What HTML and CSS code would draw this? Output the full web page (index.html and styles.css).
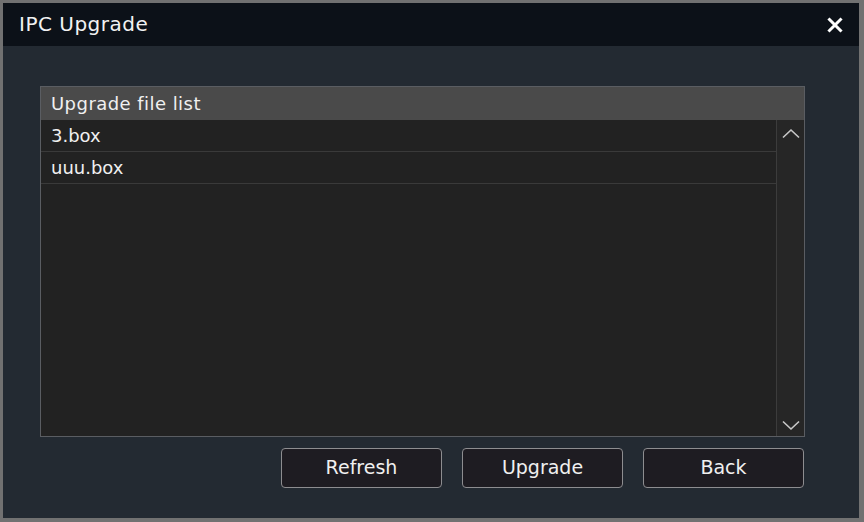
FILE: index.html
```html
<!DOCTYPE html>
<html>
<head>
<meta charset="utf-8">
<link rel="stylesheet" href="styles.css">
</head>
<body>
<div class="dialog">
  <div class="titlebar">
    <span class="title">IPC Upgrade</span>
    <svg class="close" width="16" height="16" viewBox="0 0 16 16"><path d="M2.5 2.5 L13.5 13.5 M13.5 2.5 L2.5 13.5" stroke="#fff" stroke-width="3" stroke-linecap="square"/></svg>
  </div>
  <div class="body">
    <div class="panel">
      <div class="header">Upgrade file list</div>
      <div class="listwrap">
        <div class="list">
          <div class="row">3.box</div>
          <div class="row">uuu.box</div>
        </div>
        <div class="scrollbar">
          <svg class="arrow" width="20" height="11" viewBox="0 0 20 11"><path d="M2 9.5 L10 2 L18 9.5" fill="none" stroke="#c8c8c8" stroke-width="1.6"/></svg>
          <svg class="arrow" width="20" height="11" viewBox="0 0 20 11"><path d="M2 1.5 L10 9 L18 1.5" fill="none" stroke="#c8c8c8" stroke-width="1.6"/></svg>
        </div>
      </div>
    </div>
    <div class="buttons">
      <button class="btn">Refresh</button>
      <button class="btn">Upgrade</button>
      <button class="btn">Back</button>
    </div>
  </div>
</div>
</body>
</html>
```
FILE: styles.css
```css
html, body {
  margin: 0;
  padding: 0;
  background: #6e6e6e;
}
.dialog {
  width: 864px;
  height: 522px;
  box-sizing: border-box;
  border: 3px solid #717171;
  border-right-width: 5px;
  border-bottom-width: 4px;
  display: flex;
  flex-direction: column;
  background: #232a32;
  font-family: "DejaVu Sans", sans-serif;
  color: #ececec;
}
.titlebar {
  height: 43px;
  background: #0c1118;
  display: flex;
  align-items: center;
  justify-content: space-between;
  padding: 0 16px 0 16px;
  flex-shrink: 0;
}
.title {
  font-size: 20px;
  letter-spacing: 0.5px;
  color: #f2f2f2;
  position: relative;
  top: -1px;
}
.close {
  display: block;
}
.body {
  flex: 1;
  padding: 40px 54px 0 37px;
  display: flex;
  flex-direction: column;
}
.panel {
  height: 349px;
  border: 1px solid #5a5d62;
  display: flex;
  flex-direction: column;
  background: #212121;
}
.header {
  height: 33px;
  background: #4a4a4a;
  font-size: 18px;
  letter-spacing: 0.45px;
  line-height: 33px;
  padding-left: 10px;
  color: #f0f0f0;
  flex-shrink: 0;
}
.listwrap {
  flex: 1;
  display: flex;
}
.list {
  flex: 1;
  background: #222222;
}
.row {
  height: 31px;
  border-bottom: 1px solid #3a3a3a;
  font-size: 18px;
  line-height: 31px;
  padding-left: 10px;
  color: #f0f0f0;
}
.scrollbar {
  width: 27px;
  border-left: 1px solid #3c3c3c;
  background: #262626;
  display: flex;
  flex-direction: column;
  justify-content: space-between;
  align-items: center;
  padding: 8px 0 5px;
}
.arrow {
  display: block;
}
.buttons {
  display: flex;
  justify-content: flex-end;
  gap: 20px;
  margin-top: 11px;
  padding-right: 1px;
}
.btn {
  width: 161px;
  height: 40px;
  box-sizing: border-box;
  border: 1px solid #8d8d90;
  border-radius: 4px;
  background: #1e1c22;
  color: #f0f0f0;
  font-family: "DejaVu Sans", sans-serif;
  font-size: 19px;
  padding: 0 0 2px;
}
```
